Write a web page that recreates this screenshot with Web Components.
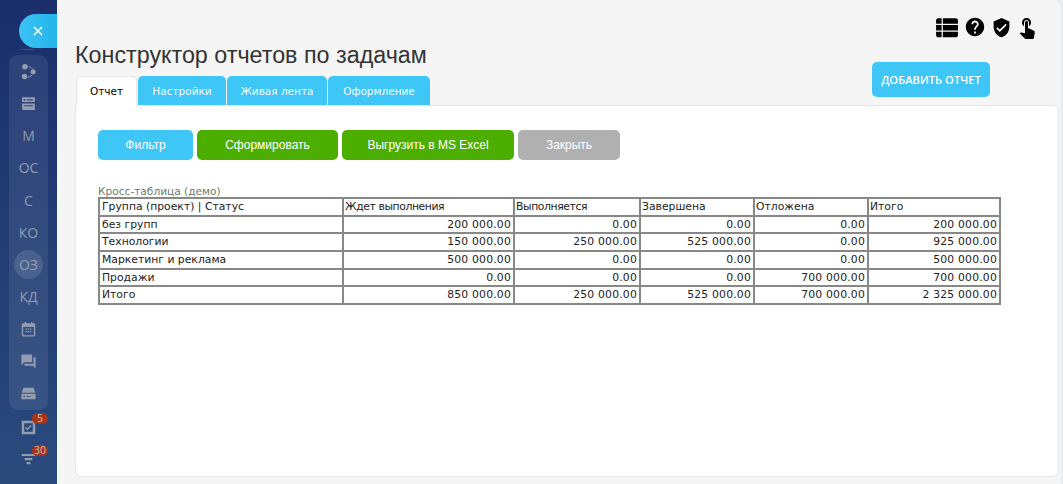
<!DOCTYPE html>
<html lang="ru">
<head>
<meta charset="utf-8">
<title>Конструктор отчетов по задачам</title>
<style>
    html, body { margin: 0; height: 100%; overflow: hidden; background: #f5f5f5; }
</style>
</head>
<body>
<report-app></report-app>

<script>
// Иконки (viewBox 24x24)
const ICONS = {
    list: 'M2 5C2 4 3 3 4 3h3.300v5.400H2zM8.500 3H21c1 0 2 1 2 2v3.400H8.500zM2 9.500h5.300v5.400H2zM8.500 9.500H23v5.400H8.500zM2 16h5.300v5.400H4c-1 0-2-1-2-2zM8.500 16H23v3.400c0 1-1 2-2 2H8.500z',
    help: 'M12 2C6.48 2 2 6.48 2 12s4.48 10 10 10 10-4.48 10-10S17.52 2 12 2zm1 17h-2v-2h2v2zm2.07-7.75l-.9.92C13.45 12.9 13 13.5 13 15h-2v-.5c0-1.1.45-2.1 1.17-2.83l1.24-1.26c.37-.36.59-.86.59-1.41 0-1.1-.9-2-2-2s-2 .9-2 2H8c0-2.21 1.79-4 4-4s4 1.79 4 4c0 .88-.36 1.68-.93 2.25z',
    shield: 'M12 1L3 5v6c0 5.55 3.84 10.74 9 12 5.16-1.26 9-6.45 9-12V5l-9-4zm-2 16l-4-4 1.41-1.41L10 14.17l6.59-6.59L18 9l-8 8z',
    touch: 'M9 11.24V7.5C9 6.12 10.12 5 11.5 5S14 6.12 14 7.5v3.74c1.21-.81 2-2.18 2-3.74C16 5.01 13.99 3 11.5 3S7 5.01 7 7.5c0 1.56.79 2.93 2 3.74zm9.84 4.63l-4.54-2.26c-.17-.07-.35-.11-.54-.11H13v-6c0-.83-.67-1.5-1.5-1.5S10 6.67 10 7.5v10.74l-3.43-.72c-.08-.01-.15-.03-.24-.03-.31 0-.59.13-.79.33l-.79.8 4.94 4.94c.27.27.65.44 1.06.44h6.79c.75 0 1.33-.55 1.44-1.28l.75-5.27c.01-.07.02-.14.02-.2 0-.62-.38-1.16-.91-1.38z',
    share: '<circle cx="7" cy="5.200" r="3.900"/><circle cx="18.500" cy="12.500" r="3.600"/><circle cx="6.400" cy="19" r="3.900"/><path d="M12 4.800a8 8 0 0 1 5.600 3.600M17 17a8 8 0 0 1-6 3.200" fill="none" stroke="currentColor" stroke-width="1.300"/>',
    browser: 'M3 3h18v18H3zM3 10v2h18v-2zM6.500 5.500a1.200 1.200 0 1 0 .01 0zM10 6v1.600h8V6zM6 14.500v1.500h12v-1.500z',
    calendar: 'M6.500 1.500h2V3h7V1.500h2V3h2c1.100 0 2 .9 2 2v15c0 1.100-.9 2-2 2H4.500c-1.100 0-2-.9-2-2V5c0-1.100.9-2 2-2h2zM4.500 8.500V20h15V8.500zM8 10.500h2v2H8zM11 10.500h2v2h-2zM14 10.500h2v2h-2zM8 14h2v2H8zM11 14h2v2h-2zM14 14h2v2h-2z',
    forum: 'M21 6h-2v9H6v2c0 .55.45 1 1 1h11l4 4V7c0-.55-.45-1-1-1zm-4 6V3c0-.55-.45-1-1-1H3c-.55 0-1 .45-1 1v14l4-4h10c.55 0 1-.45 1-1z',
    tray: 'M5 4h14l2.500 7H2.500zM2 12.500h20V20H2zM5 15v2h2v-2zM9 15.500v1h6v-1z',
    check: 'M2.500 2.500h19v19h-19zM6 6v12h12V6zM10.500 16l-3.400-3.400 1.400-1.400 2 2 4.600-4.600 1.400 1.400z',
    filter: 'M1 3h22v3.500H1zM6 9.500h12V13H6zM9 16h6v3.500H9z'
};

function icon(name, size) {
    const art = ICONS[name];
    const inner = art[0] === '<' ? art : `<path d="${art}"/>`;
    return `<svg width="${size}" height="${size}" viewBox="0 0 24 24" fill="currentColor" fill-rule="evenodd">${inner}</svg>`;
}

// Пункт бокового меню
class SideItem extends HTMLElement {
    connectedCallback() {
        const root = this.attachShadow({ mode: 'open' });
        const name = this.getAttribute('icon');
        const badge = this.getAttribute('badge');
        const big = name ? icon(name, this.getAttribute('size') || 20) : '';
        root.innerHTML = `
            <style>
                :host {
                    display: flex;
                    position: relative;
                    width: 39px;
                    height: 32.4px;
                    align-items: center;
                    justify-content: center;
                    color: #949cb0;
                    font: 14px "Open Sans", sans-serif;
                }
                :host([active]) .in {
                    background: rgba(255,255,255,.12);
                    border-radius: 50%;
                }
                .in {
                    width: 29px;
                    height: 29px;
                    display: flex;
                    align-items: center;
                    justify-content: center;
                }
                .badge {
                    position: absolute;
                    left: 23px;
                    top: 2px;
                    box-sizing: border-box;
                    width: 16px;
                    height: 11px;
                    border-radius: 6px;
                    background: #a5351a;
                    color: #d8b8ab;
                    font: 10.5px/11px "Open Sans", sans-serif;
                    text-align: center;
                }
                svg { display: block; }
            </style>
            <div class="in">${big}<slot></slot></div>
            ${badge ? `<span class="badge">${badge}</span>` : ''}
        `;
    }
}
customElements.define('side-item', SideItem);

// Боковая панель
class AppSidebar extends HTMLElement {
    constructor() {
        super();
        this.attachShadow({ mode: 'open' }).innerHTML = `
            <style>
                :host {
                    display: flex;
                    flex-direction: column;
                    align-items: flex-start;
                    box-sizing: border-box;
                    flex: none;
                    width: 57px;
                    height: 484px;
                    padding-top: 14px;
                    background: linear-gradient(180deg, #1a2f6c 0%, #2a4a7c 100%);
                }
                .close {
                    align-self: flex-end;
                    width: 38px;
                    height: 34px;
                    border-radius: 17px 0 0 17px;
                    background: linear-gradient(90deg, #3cc3f5, #24b5ea);
                    color: #fff;
                    display: flex;
                    align-items: center;
                    justify-content: center;
                }
                .line {
                    width: 13px;
                    height: 1px;
                    margin: 1px 0 0 21px;
                    background: rgba(255,255,255,.16);
                }
                .group {
                    margin: 5px 0 0 9px;
                    width: 39px;
                    height: 355px;
                    border-radius: 9px;
                    background: rgba(255,255,255,.08);
                    display: flex;
                    flex-direction: column;
                }
                .rest { margin: 0 0 0 9px; padding-top: 1px; }
            </style>
            <div class="close">
                <svg width="10" height="10" viewBox="0 0 10 10"><path d="M1 1l8 8M9 1l-8 8" stroke="#fff" stroke-width="1.500" fill="none"/></svg>
            </div>
            <div class="line"></div>
            <div class="group">
                <side-item icon="share" size="17"></side-item>
                <side-item icon="browser" size="17"></side-item>
                <side-item>М</side-item>
                <side-item>ОС</side-item>
                <side-item>С</side-item>
                <side-item>КО</side-item>
                <side-item active>ОЗ</side-item>
                <side-item>КД</side-item>
                <side-item icon="calendar" size="17"></side-item>
                <side-item icon="forum" size="17"></side-item>
                <side-item icon="tray" size="17"></side-item>
            </div>
            <div class="rest">
                <side-item icon="check" size="17" badge="5"></side-item>
                <side-item icon="filter" size="15" badge="30"></side-item>
            </div>
        `;
    }
}
customElements.define('app-sidebar', AppSidebar);

// Кнопка
class UiButton extends HTMLElement {
    constructor() {
        super();
        this.attachShadow({ mode: 'open' }).innerHTML = `
            <style>
                :host {
                    display: inline-flex;
                    box-sizing: border-box;
                    align-items: center;
                    justify-content: center;
                    height: 30px;
                    border-radius: 5px;
                    color: #fff;
                    background: #3ec6f7;
                    font: 12px "Liberation Sans", Arial, sans-serif;
                }
                :host([color="green"]) { background: #4caf00; }
                :host([color="grey"]) { background: #b0b0b0; }
            </style>
            <slot></slot>
        `;
    }
}
customElements.define('ui-button', UiButton);

// Иконки вверху справа
class TopIcons extends HTMLElement {
    constructor() {
        super();
        this.attachShadow({ mode: 'open' }).innerHTML = `
            <style>
                :host {
                    display: flex;
                    justify-content: flex-end;
                    align-items: center;
                    height: 20px;
                    padding-right: 20px;
                    color: #000;
                }
                svg { display: block; }
                svg:nth-of-type(1) { margin-right: 5px; }
                svg:nth-of-type(2) { margin-right: 5px; }
                svg:nth-of-type(3) { margin-right: 3px; }
            </style>
            ${icon('list', 25)}${icon('help', 22)}${icon('shield', 21)}${icon('touch', 24)}
        `;
    }
}
customElements.define('top-icons', TopIcons);

// Вкладки
class ReportTabs extends HTMLElement {
    constructor() {
        super();
        this.attachShadow({ mode: 'open' }).innerHTML = `
            <style>
                :host {
                    display: flex;
                    gap: 1px;
                    height: 29px;
                    margin-left: 1px;
                    font: 10.5px "DejaVu Sans", Verdana, sans-serif;
                    position: relative;
                    z-index: 1;
                }
                span {
                    display: flex;
                    align-items: center;
                    justify-content: center;
                    box-sizing: border-box;
                    background: #3ec6f7;
                    color: #f4fbff;
                    border-radius: 5px 5px 0 0;
                }
                .on {
                    height: 30px;
                    padding-bottom: 1px;
                    background: #fff;
                    color: #000;
                    border: 1px solid #e6e6e6;
                    border-bottom: 0;
                }
            </style>
            <span class="on" style="width:61px">Отчет</span>
            <span style="width:88px">Настройки</span>
            <span style="width:100px">Живая лента</span>
            <span style="width:102px">Оформление</span>
        `;
    }
}
customElements.define('report-tabs', ReportTabs);

// Кросс-таблица
class CrossTable extends HTMLElement {
    constructor() {
        super();
        const rows = [
            ['Группа (проект) | Статус', 'Ждет выполнения', 'Выполняется', 'Завершена', 'Отложена', 'Итого'],
            ['без групп', '200 000.00', '0.00', '0.00', '0.00', '200 000.00'],
            ['Технологии', '150 000.00', '250 000.00', '525 000.00', '0.00', '925 000.00'],
            ['Маркетинг и реклама', '500 000.00', '0.00', '0.00', '0.00', '500 000.00'],
            ['Продажи', '0.00', '0.00', '0.00', '700 000.00', '700 000.00'],
            ['Итого', '850 000.00', '250 000.00', '525 000.00', '700 000.00', '2 325 000.00']
        ];
        const body = rows.map((row, i) => '<tr>' + row.map((cell, j) =>
            `<td class="${i && j ? 'num' : ''}">${cell}</td>`).join('') + '</tr>').join('');
        this.attachShadow({ mode: 'open' }).innerHTML = `
            <style>
                :host {
                    display: block;
                    font: 10.8px "DejaVu Sans", Verdana, sans-serif;
                    color: #222;
                }
                .cap { color: #6f7a6f; height: 12px; line-height: 12px; font-size: 10.6px; }
                table {
                    border-collapse: collapse;
                    table-layout: fixed;
                    width: 903px;
                    border: 2px solid #444;
                }
                td {
                    border: 2px solid #888;
                    padding: 0 2px 0 1px;
                    height: 16px;
                    line-height: 14px;
                    white-space: nowrap;
                }
                td:first-child { padding-left: 2px; }
                tr:nth-child(2) td, tr:nth-child(5) td { height: 15px; }
                tr:first-child td:nth-child(2), tr:first-child td:nth-child(3) { letter-spacing: -.4px; }
                .num { text-align: right; letter-spacing: .2px; }
            </style>
            <div class="cap">Кросс-таблица (демо)</div>
            <table>
                <colgroup><col style="width:244px"><col style="width:171px"><col style="width:126px"><col style="width:114px"><col style="width:114px"><col style="width:132px"></colgroup>
                ${body}
            </table>
        `;
    }
}
customElements.define('cross-table', CrossTable);

// Вся страница
class ReportApp extends HTMLElement {
    constructor() {
        super();
        this.attachShadow({ mode: 'open' }).innerHTML = `
            <style>
                :host { display: flex; height: 484px; background: #e6ecef; overflow: hidden; }
                main {
                    flex: 1;
                    min-width: 0;
                    padding: 17px 2px 0 18px;
                    margin-right: 2px;
                    background: #f5f5f5;
                    border-radius: 0 8px 0 0;
                    display: flex;
                    flex-direction: column;
                }
                .head { display: flex; justify-content: space-between; height: 39px; }
                h1 {
                    margin: 4px 0 0 0;
                    font: 23.3px/28px "Liberation Sans", Arial, sans-serif;
                    color: #333;
                }
                .add {
                    width: 118px;
                    height: 35px;
                    margin: 25px 69px 0 0;
                    font: 600 11.2px "Open Sans", sans-serif;
                    background: #3ec6f7;
                }
                .panel {
                    box-sizing: border-box;
                    height: 372px;
                    padding: 24px 22px 0;
                    background: #fff;
                    border: 1px solid #e6e6e6;
                    border-radius: 0 6px 6px 6px;
                }
                .bar { display: flex; gap: 4px; margin-bottom: 25px; }
            </style>
            <app-sidebar></app-sidebar>
            <main>
                <top-icons></top-icons>
                <div class="head">
                    <h1>Конструктор отчетов по задачам</h1>
                    <ui-button class="add">ДОБАВИТЬ ОТЧЕТ</ui-button>
                </div>
                <report-tabs></report-tabs>
                <div class="panel">
                    <div class="bar">
                        <ui-button style="width:95px">Фильтр</ui-button>
                        <ui-button color="green" style="width:141px">Сформировать</ui-button>
                        <ui-button color="green" style="width:172px">Выгрузить в MS Excel</ui-button>
                        <ui-button color="grey" style="width:102px">Закрыть</ui-button>
                    </div>
                    <cross-table></cross-table>
                </div>
            </main>
        `;
    }
}
customElements.define('report-app', ReportApp);
</script>
</body>
</html>
